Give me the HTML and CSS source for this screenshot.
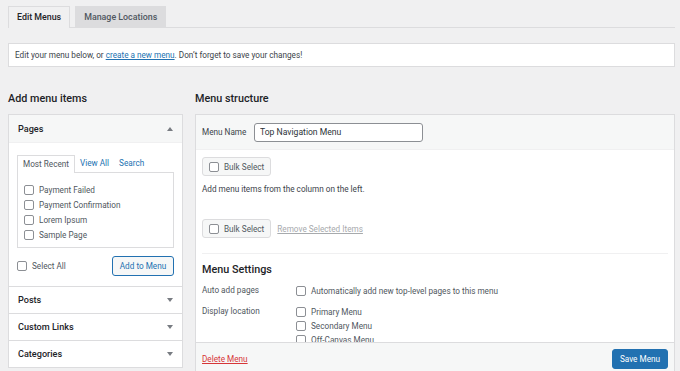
FILE: index.html
```html
<!DOCTYPE html>
<html lang="en">
<head>
    <meta charset="UTF-8">
    <meta name="viewport" content="width=device-width, initial-scale=1.0">
    <title>Menus</title>
    <link rel="stylesheet" href="styles.css">
</head>
<body>
    <div class="nav-tabs">
        <a class="nav-tab active" href="#">Edit Menus</a>
        <a class="nav-tab" href="#">Manage Locations</a>
    </div>

    <div class="notice">
        Edit your menu below, or <a href="#">create a new menu</a>. Don’t forget to save your changes!
    </div>

    <div class="columns">
        <div class="col-left">
            <h2>Add menu items</h2>
            <div class="accordion">
                <div class="acc-section open">
                    <div class="acc-title">Pages <span class="arrow up"></span></div>
                    <div class="acc-body">
                        <div class="tabs">
                            <span class="tab active">Most Recent</span>
                            <a class="tab" href="#">View All</a>
                            <a class="tab" href="#">Search</a>
                        </div>
                        <div class="tab-panel">
                            <label class="check"><span class="box"></span>Payment Failed</label>
                            <label class="check"><span class="box"></span>Payment Confirmation</label>
                            <label class="check"><span class="box"></span>Lorem Ipsum</label>
                            <label class="check"><span class="box"></span>Sample Page</label>
                        </div>
                        <div class="add-row">
                            <label class="check"><span class="box"></span>Select All</label>
                            <button class="btn-secondary">Add to Menu</button>
                        </div>
                    </div>
                </div>
                <div class="acc-section">
                    <div class="acc-title">Posts <span class="arrow"></span></div>
                </div>
                <div class="acc-section">
                    <div class="acc-title">Custom Links <span class="arrow"></span></div>
                </div>
                <div class="acc-section">
                    <div class="acc-title">Categories <span class="arrow"></span></div>
                </div>
            </div>
        </div>

        <div class="col-right">
            <h2>Menu structure</h2>
            <div class="menu-edit">
                <div class="menu-header">
                    <label class="menu-name-label">Menu Name</label>
                    <input class="menu-name" type="text" value="Top Navigation Menu">
                </div>
                <div class="menu-body">
                    <div class="bulk-row">
                        <button class="btn-bulk"><span class="box"></span>Bulk Select</button>
                    </div>
                    <p class="hint">Add menu items from the column on the left.</p>
                    <div class="bulk-row">
                        <button class="btn-bulk"><span class="box"></span>Bulk Select</button>
                        <a class="remove-link" href="#">Remove Selected Items</a>
                    </div>
                    <div class="menu-settings">
                        <h3>Menu Settings</h3>
                        <div class="setting-row">
                            <div class="setting-label">Auto add pages</div>
                            <div class="setting-opts">
                                <label class="check"><span class="box"></span>Automatically add new top-level pages to this menu</label>
                            </div>
                        </div>
                        <div class="setting-row">
                            <div class="setting-label">Display location</div>
                            <div class="setting-opts">
                                <label class="check"><span class="box"></span>Primary Menu</label>
                                <label class="check"><span class="box"></span>Secondary Menu</label>
                                <label class="check"><span class="box"></span>Off-Canvas Menu</label>
                            </div>
                        </div>
                    </div>
                </div>
                <div class="menu-footer">
                    <a class="delete-link" href="#">Delete Menu</a>
                    <button class="btn-primary">Save Menu</button>
                </div>
            </div>
        </div>
    </div>
</body>
</html>
```

FILE: styles.css
```css
body {
    margin: 0;
    padding: 6px 5px 0 8px;
    background-color: #f0f0f1;
    color: #3c434a;
    font-family: Roboto, "Noto Sans", sans-serif;
    font-size: 8.2px;
    height: 371px;
    box-sizing: border-box;
    overflow: hidden;
}

a {
    color: #2271b1;
}

/* top tabs */
.nav-tabs {
    display: flex;
    border-bottom: 1px solid #dcdcde;
    height: 21px;
}

.nav-tab {
    display: block;
    margin-right: 5px;
    padding: 0 8px;
    line-height: 20px;
    height: 21px;
    box-sizing: border-box;
    border: 1px solid #dcdcde;
    border-bottom: none;
    background-color: #dcdcde;
    color: #50575e;
    font-size: 8.85px;
    font-weight: 500;
    text-decoration: none;
}

.nav-tab.active {
    background-color: #f0f0f1;
    color: #1d2327;
    height: 22px;
    margin-bottom: -1px;
}

.notice {
    margin-top: 15px;
    height: 24px;
    line-height: 22px;
    box-sizing: border-box;
    padding: 0 6px;
    background-color: #fff;
    border: 1px solid #dcdcde;
    color: #3c434a;
}

/* columns */
.columns {
    display: flex;
    gap: 12px;
    margin-top: 24px;
}

.col-left {
    width: 175px;
    flex: none;
}

.col-right {
    flex: 1;
}

h2 {
    margin: 0 0 7px;
    height: 16px;
    line-height: 16px;
    font-size: 10.8px;
    font-weight: 500;
    color: #1d2327;
}

/* accordion */
.accordion {
    background-color: #fff;
    border: 1px solid #dcdcde;
}

.acc-section {
    border-top: 1px solid #dcdcde;
}

.acc-section:first-child {
    border-top: none;
}

.acc-title {
    display: flex;
    justify-content: space-between;
    align-items: center;
    height: 26px;
    padding: 0 9px;
    font-size: 9.1px;
    font-weight: 500;
    color: #1d2327;
}

.open .acc-title {
    height: 27px;
    background-color: #f6f7f7;
    border-bottom: 1px solid #f0f0f1;
}

.arrow {
    width: 0;
    height: 0;
    border-left: 3px solid transparent;
    border-right: 3px solid transparent;
    border-top: 4px solid #787c82;
}

.arrow.up {
    border-top: none;
    border-bottom: 4px solid #787c82;
}

.acc-body {
    padding: 12px 8px 10px;
}

.tabs {
    display: flex;
    height: 17px;
    align-items: stretch;
}

.tab {
    padding: 0 5px;
    line-height: 17px;
    color: #2271b1;
    text-decoration: none;
}

.tab.active {
    color: #50575e;
    border: 1px solid #dcdcde;
    border-bottom: none;
    background-color: #fff;
    line-height: 16px;
    position: relative;
    z-index: 1;
    margin-bottom: -1px;
    padding-bottom: 1px;
}

.tab-panel {
    border: 1px solid #dcdcde;
    height: 76px;
    box-sizing: border-box;
    padding: 9px 6px 0;
}

.check {
    display: flex;
    align-items: center;
    height: 15px;
    color: #50575e;
    white-space: nowrap;
}

.box {
    display: inline-block;
    width: 8px;
    height: 8px;
    border: 1px solid #8c8f94;
    border-radius: 2px;
    background-color: #fff;
    margin-right: 5px;
    flex: none;
}

.add-row {
    display: flex;
    justify-content: space-between;
    align-items: center;
    margin-top: 8px;
}

button {
    font-family: inherit;
    cursor: pointer;
}

.btn-secondary {
    height: 20px;
    width: 62px;
    padding: 0;
    background-color: #f6f7f7;
    border: 1px solid #2271b1;
    border-radius: 3px;
    color: #2271b1;
    font-size: 8.2px;
}

/* menu structure */
.menu-edit {
    background-color: #fff;
    border: 1px solid #dcdcde;
    display: flex;
    flex-direction: column;
    height: 262px;
    box-sizing: border-box;
}

.menu-header {
    display: flex;
    align-items: center;
    height: 34px;
    flex: none;
    padding: 0 6px;
    background-color: #f6f7f7;
    border-bottom: 1px solid #f0f0f1;
}

.menu-name-label {
    width: 46px;
    margin-right: 6px;
    color: #3c434a;
}

.menu-name {
    width: 169px;
    height: 19px;
    box-sizing: border-box;
    padding: 0 5px;
    border: 1px solid #8c8f94;
    border-radius: 3px;
    font-family: inherit;
    font-size: 8.6px;
    color: #2c3338;
}

.menu-body {
    flex: 1;
    overflow: hidden;
    padding: 7px 6px 0;
}

.bulk-row {
    display: flex;
    align-items: center;
    gap: 6px;
}

.btn-bulk {
    display: flex;
    align-items: center;
    height: 19px;
    padding: 0 6px;
    white-space: nowrap;
    background-color: #f6f7f7;
    border: 1px solid #dcdcde;
    border-radius: 3px;
    color: #50575e;
    font-size: 8.2px;
}

.remove-link {
    color: #a7aaad;
}

.hint {
    margin: 8px 0 25px;
    line-height: 10px;
    color: #3c434a;
}

.menu-settings {
    margin-top: 15px;
    border-top: 1px solid #f0f0f1;
    padding-top: 9px;
}

h3 {
    margin: 0 0 6px;
    line-height: 14px;
    font-size: 10.8px;
    font-weight: 500;
    color: #1d2327;
}

.setting-row {
    display: flex;
    margin-bottom: 6px;
}

.setting-label {
    width: 94px;
    line-height: 15px;
    color: #50575e;
}

.setting-opts .check {
    height: 14px;
}

.setting-opts .check:first-child {
    height: 15px;
}

.menu-footer {
    flex: none;
    display: flex;
    justify-content: space-between;
    align-items: center;
    height: 32px;
    padding: 0 6px;
    background-color: #f6f7f7;
    border-top: 1px solid #dcdcde;
}

.delete-link {
    color: #d63638;
}

.btn-primary {
    height: 20px;
    width: 56px;
    padding: 0;
    background-color: #2271b1;
    border: 1px solid #2271b1;
    border-radius: 3px;
    color: #fff;
    font-size: 8.2px;
}
```
